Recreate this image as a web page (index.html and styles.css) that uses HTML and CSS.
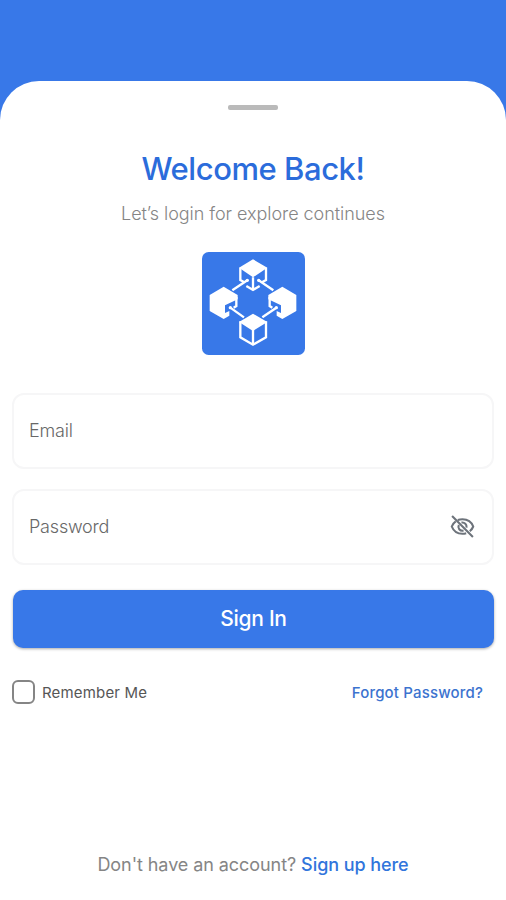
FILE: index.html
```html
<!DOCTYPE html>
<html lang="en">
<head>
<meta charset="utf-8">
<title>Sign In</title>
<link rel="stylesheet" href="styles.css">
</head>
<body>
<main class="sheet">
  <div class="handle"></div>
  <h1 class="title">Welcome Back!</h1>
  <p class="subtitle">Let’s login for explore continues</p>
  <svg class="logo" viewBox="36 36 309 309" aria-hidden="true">
    <rect x="36" y="36" width="309" height="309" rx="20" fill="#3878e8"/>
    <g fill="none" stroke="#fff" stroke-width="7">
      <path d="M151 83V120L163 127M228 83V120L216 127M169 138L189 150L209 138M189 112V149"/>
      <path d="M127 151L172 121M206 121L250 151M121 203L162 232M259 203L217 232"/>
      <path d="M151 244V292L189 314L228 292V244M189 268V314"/>
      <path d="M139 171V198L131 203M239 171V198L247 203"/>
    </g>
    <g fill="#fff">
      <path d="M189 58L232 83L189 112L147 83Z"/>
      <circle cx="172" cy="121" r="5"/><circle cx="206" cy="121" r="5"/>
      <path d="M101 140L143 165V178L105 196V219L118 213V227L101 237L59 213V165Z"/>
      <path d="M277 140L319 165V213L277 237L260 227V213L273 219V196L235 178V165Z"/>
      <circle cx="121" cy="203" r="5"/><circle cx="259" cy="203" r="5"/>
      <path d="M189 221L232 246L189 273L147 246Z"/>
    </g>
  </svg>
  <form class="form">
    <label class="field"><span>Email</span></label>
    <label class="field"><span>Password</span>
      <svg class="eye" viewBox="0 0 24 24" fill="none" stroke="#6d737b" stroke-width="2" aria-hidden="true">
        <path d="M7.500 5.800C9 5.200 10.400 5 12 5C17 5 20.800 8 22.300 12C21.600 13.800 20.500 15.400 19 16.600M15.500 18.400C14.400 18.800 13.200 19 12 19C7 19 3.200 16 1.700 12C2.500 9.900 3.800 8.200 5.500 7"/>
        <path d="M11 8.200C14 7.700 16.300 10 15.900 13M8.500 10.500C7 13.500 9.500 16.700 13 15.900M2 2L22 22"/>
      </svg>
    </label>
    <button class="submit" type="button">Sign In</button>
    <div class="options">
      <label class="remember"><i class="box"></i><span>Remember Me</span></label>
      <a class="forgot">Forgot Password?</a>
    </div>
  </form>
  <p class="signup">Don't have an account? <a class="join">Sign up here</a></p>
</main>
</body>
</html>
```
FILE: styles.css
```css
* { box-sizing: border-box; }
body {
  margin: 0;
  height: 900px;
  padding-top: 81px;
  background: linear-gradient(#3878e8 160px, #fff 160px);
  font-family: Inter, "Liberation Sans", sans-serif;
}
.sheet {
  height: 819px;
  padding: 24px 12px 0;
  display: flex;
  flex-direction: column;
  align-items: center;
  background: #fff;
  border-radius: 39px 39px 0 0;
}
.handle { width: 50px; height: 5px; border-radius: 2px; background: #bababa; }
.title {
  margin: 39px 0 0;
  font-size: 31px;
  line-height: 40px;
  font-weight: 500;
  letter-spacing: -0.45px;
  color: #2b6cdb;
  white-space: nowrap;
}
.subtitle {
  margin: 13px 0 0;
  font-size: 18px;
  line-height: 24px;
  font-weight: 300;
  letter-spacing: -0.05px;
  color: #858585;
  white-space: nowrap;
}
.logo { width: 103px; height: 103px; margin-top: 26px; flex: none; }
.form { width: 482px; margin-top: 38px; }
.field {
  height: 76px;
  margin-bottom: 20px;
  padding: 0 17px 2px 15px;
  display: flex;
  align-items: center;
  justify-content: space-between;
  border: 2px solid #f6f6f7;
  border-radius: 12px;
  font-size: 18px;
  font-weight: 300;
  letter-spacing: -0.2px;
  color: #686868;
}
.field .eye { width: 25px; height: 25px; }
.submit {
  display: block;
  width: 481px;
  height: 58px;
  margin: 25px 0 0 1px;
  padding: 0;
  border: 0;
  border-radius: 10px;
  background: #3878e8;
  box-shadow: 0 1px 3px #0005;
  color: #fff;
  font: 500 21px/30px Inter, "Liberation Sans", sans-serif;
  letter-spacing: -0.3px;
}
.options {
  height: 24px;
  margin-top: 32px;
  padding-right: 11px;
  display: flex;
  align-items: center;
  justify-content: space-between;
  font-size: 15px;
  letter-spacing: 0.17px;
}
.remember { display: flex; align-items: center; gap: 7px; color: #565656; }
.box { width: 23px; height: 24px; border: 2px solid #858585; border-radius: 6px; }
.forgot { font-weight: 500; color: #3c73cf; }
.signup {
  margin: 149px 0 0;
  font-size: 18px;
  line-height: 24px;
  letter-spacing: -0.07px;
  color: #858585;
  white-space: nowrap;
}
.join { font-weight: 500; color: #3175dc; }
```
